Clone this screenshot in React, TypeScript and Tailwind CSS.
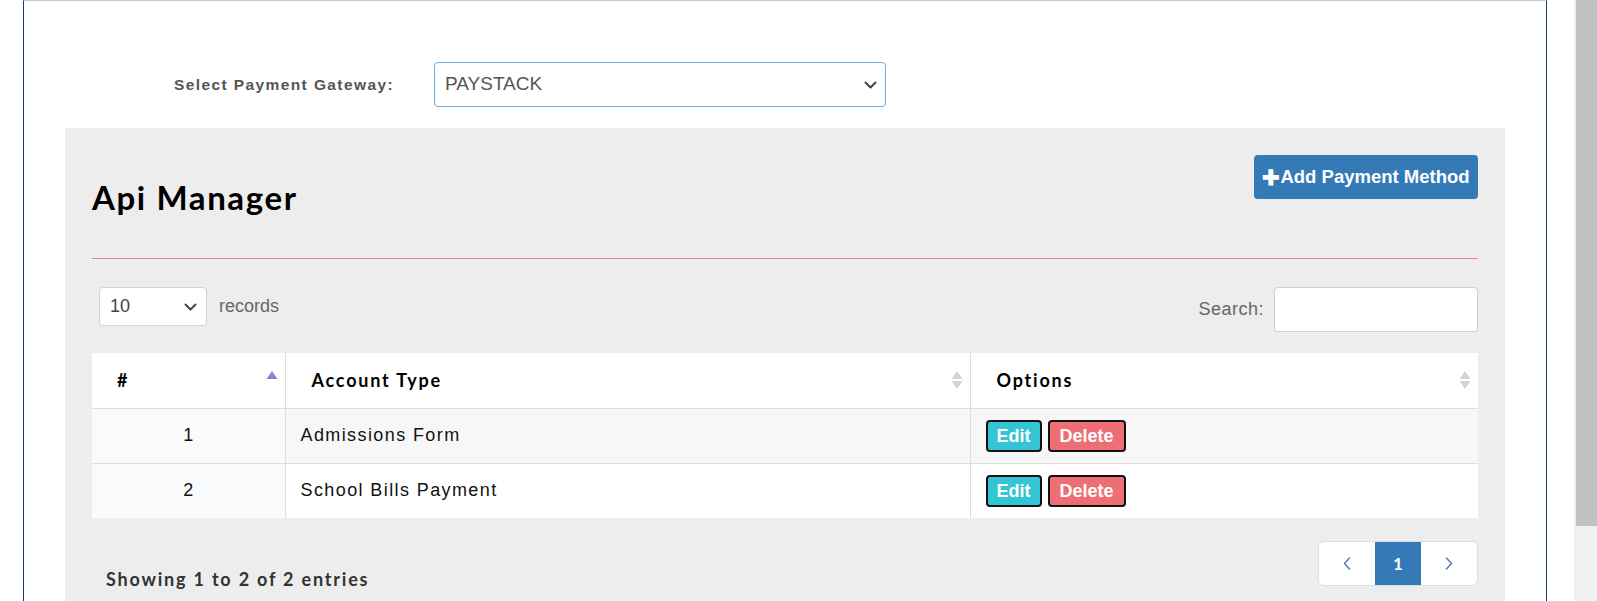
import React from "react";

const rows = [
  { id: 1, name: "Admissions Form" },
  { id: 2, name: "School Bills Payment" },
];

function SortArrows({ active }: { active?: boolean }) {
  return (
    <svg width="12" height="20" viewBox="0 0 12 20" className="absolute right-[7px] top-1/2 -translate-y-1/2">
      <polygon points="6,1 11.5,9 0.5,9" fill={active ? "#8585dc" : "#d3d3d3"} />
      {!active && <polygon points="0.5,11 11.5,11 6,19" fill="#d3d3d3" />}
    </svg>
  );
}

function Chevron() {
  return (
    <svg width="13" height="8" viewBox="0 0 13 8" fill="none">
      <path d="M1.5 1.5l5 5 5-5" stroke="#444" strokeWidth="2" strokeLinecap="round" strokeLinejoin="round" />
    </svg>
  );
}

function PageArrow({ dir }: { dir: "left" | "right" }) {
  return (
    <svg width="8" height="13" viewBox="0 0 8 13" fill="none">
      <path
        d={dir === "left" ? "M6.5 1L1.5 6.5l5 5.5" : "M1.5 1l5 5.5-5 5.5"}
        stroke="#5a7ea8"
        strokeWidth="1.5"
        strokeLinecap="round"
        strokeLinejoin="round"
      />
    </svg>
  );
}

export default function App() {
  const raleway = "font-['Lato','Open_Sans',sans-serif]";
  const arial = "font-['Liberation_Sans',Arial,sans-serif]";

  return (
    <div className="flex w-full h-[601px] overflow-hidden bg-white">
      <div className="flex-1 pl-[23px] pr-[27px]">
        <div className="h-full border-x border-x-[#163e63] border-t border-t-[#c8c8c8]">
          <div className="flex items-center pt-[61px] pl-[150px]">
            <span className={`${arial} font-bold text-[15.5px] tracking-[1.4px] text-[#555]`}>
              Select Payment Gateway:
            </span>
            <div className="flex items-center justify-between ml-[40px] w-[452px] h-[45px] pl-[10px] pr-[8px] bg-white border border-[#66afe9] rounded-[4px]">
              <span className={`${arial} text-[19px] text-[#555]`}>PAYSTACK</span>
              <Chevron />
            </div>
          </div>

          <div className="mx-[41px] mt-[21px] bg-[#ededed] px-[27px] pt-[27px] h-[600px]">
            <div className="flex justify-between items-start">
              <h1 className={`${raleway} mt-[23px] font-bold text-[33px] leading-[38px] tracking-[1.6px] text-black`}>
                Api Manager
              </h1>
              <button
                type="button"
                className={`${arial} h-[44px] w-[224px] rounded-[4px] bg-[#337ab7] text-white font-bold text-[18.5px] flex items-center justify-center`}
              >
                <span className="text-[21px] leading-none">✚</span>Add Payment Method
              </button>
            </div>

            <div className="mt-[42px] h-px bg-[#f08080]" />

            <div className="flex justify-between items-start mt-[28px]">
              <div className="flex items-center ml-[7px]">
                <div className="flex items-center justify-between w-[108px] h-[39px] pl-[10px] pr-[9px] bg-white border border-[#d3d3d3] rounded-[4px]">
                  <span className={`${arial} text-[18px] text-[#444]`}>10</span>
                  <Chevron />
                </div>
                <span className={`${arial} ml-[12px] text-[18px] text-[#666]`}>records</span>
              </div>
              <div className="flex items-center h-[45px]">
                <span className={`${arial} text-[18px] tracking-[0.5px] text-[#666]`}>Search:</span>
                <div className="ml-[10px] w-[204px] h-[45px] bg-white border border-[#cfcfcf] rounded-[4px]" />
              </div>
            </div>

            <table className="mt-[21px] w-full border-collapse table-fixed">
              <colgroup>
                <col className="w-[193px]" />
                <col className="w-[685px]" />
                <col />
              </colgroup>
              <thead>
                <tr className="h-[55px] bg-white">
                  <th className={`${raleway} relative text-left pl-[25px] font-bold text-[18px] tracking-[1.8px] text-black border-r border-[#dddddd]`}>
                    #
                    <SortArrows active />
                  </th>
                  <th className={`${raleway} relative text-left pl-[26px] font-bold text-[18px] tracking-[1.8px] text-black border-r border-[#dddddd]`}>
                    Account Type
                    <SortArrows />
                  </th>
                  <th className={`${raleway} relative text-left pl-[26px] font-bold text-[18px] tracking-[1.8px] text-black`}>
                    Options
                    <SortArrows />
                  </th>
                </tr>
              </thead>
              <tbody>
                {rows.map((row, i) => (
                  <tr key={row.id} className={`h-[55px] border-t border-[#dddddd] ${i === 0 ? "bg-[#f7f7f7]" : "bg-white"}`}>
                    <td className={`${arial} bg-[#f9fafc] text-center text-[18px] text-[#111] border-r border-[#dddddd]`}>
                      {row.id}
                    </td>
                    <td className={`${arial} pl-[15px] text-[18px] tracking-[1.4px] text-[#111] border-r border-[#dddddd]`}>
                      {row.name}
                    </td>
                    <td className="pl-[15px]">
                      <div className="flex gap-[6px] items-center">
                        <button
                          type="button"
                          className={`${arial} h-[32px] px-[9px] border-2 border-[#111] rounded-[4px] bg-[#33c5d4] text-white font-bold text-[18px] leading-none`}
                        >
                          Edit
                        </button>
                        <button
                          type="button"
                          className={`${arial} h-[32px] px-[10px] border-2 border-[#111] rounded-[4px] bg-[#ee6e75] text-white font-bold text-[18px] leading-none`}
                        >
                          Delete
                        </button>
                      </div>
                    </td>
                  </tr>
                ))}
              </tbody>
            </table>

            <div className="flex justify-between items-start mt-[23px]">
              <div className={`${raleway} pl-[14px] pt-[25px] font-bold text-[18px] leading-[26px] tracking-[1.8px] text-[#333]`}>
                Showing 1 to 2 of 2 entries
              </div>
              <div className="flex h-[45px] border border-[#dddddd] rounded-[6px] overflow-hidden bg-white">
                <span className="w-[56px] flex items-center justify-center">
                  <PageArrow dir="left" />
                </span>
                <span className={`${raleway} w-[46px] flex items-center justify-center bg-[#337ab7] text-white font-bold text-[17px]`}>1</span>
                <span className="w-[56px] flex items-center justify-center">
                  <PageArrow dir="right" />
                </span>
              </div>
            </div>
          </div>
        </div>
      </div>
      <div className="w-[23px] h-full bg-[#f1f1f1] pl-[2px]">
        <div className="h-[526px] bg-[#c1c1c1]" />
      </div>
    </div>
  );
}
